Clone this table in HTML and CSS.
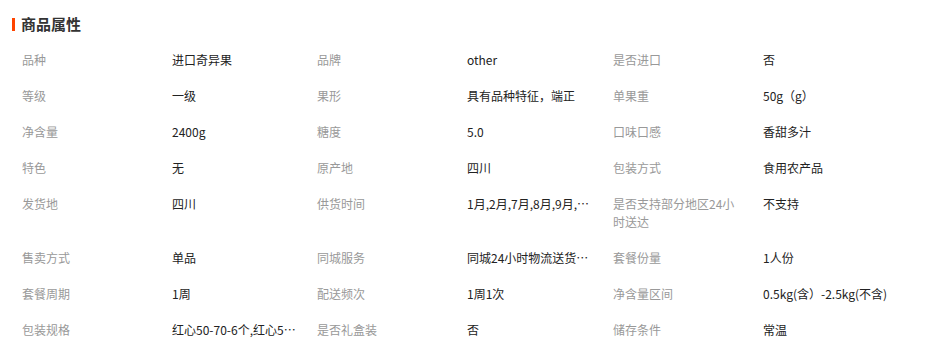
FILE: index.html
```html
<!DOCTYPE html>
<html lang="zh-CN">
<head>
<meta charset="utf-8">
<title>商品属性</title>
<link rel="stylesheet" href="styles.css">
</head>
<body>
<section class="attrs">
  <h2 class="attrs-title">商品属性</h2>
  <div class="attrs-grid">
    <div class="label">品种</div><div class="value">进口奇异果</div>
    <div class="label">品牌</div><div class="value">other</div>
    <div class="label">是否进口</div><div class="value last">否</div>

    <div class="label">等级</div><div class="value">一级</div>
    <div class="label">果形</div><div class="value">具有品种特征，端正</div>
    <div class="label">单果重</div><div class="value last">50g（g）</div>

    <div class="label">净含量</div><div class="value">2400g</div>
    <div class="label">糖度</div><div class="value">5.0</div>
    <div class="label">口味口感</div><div class="value last">香甜多汁</div>

    <div class="label">特色</div><div class="value">无</div>
    <div class="label">原产地</div><div class="value">四川</div>
    <div class="label">包装方式</div><div class="value last">食用农产品</div>

    <div class="label">发货地</div><div class="value">四川</div>
    <div class="label">供货时间</div><div class="value">1月,2月,7月,8月,9月,10月,11月,12月</div>
    <div class="label">是否支持部分地区24小时送达</div><div class="value last">不支持</div>

    <div class="label">售卖方式</div><div class="value">单品</div>
    <div class="label">同城服务</div><div class="value">同城24小时物流送货上门</div>
    <div class="label">套餐份量</div><div class="value last">1人份</div>

    <div class="label">套餐周期</div><div class="value">1周</div>
    <div class="label">配送频次</div><div class="value">1周1次</div>
    <div class="label">净含量区间</div><div class="value last">0.5kg(含）-2.5kg(不含)</div>

    <div class="label">包装规格</div><div class="value">红心50-70-6个,红心50-70-12个</div>
    <div class="label">是否礼盒装</div><div class="value">否</div>
    <div class="label">储存条件</div><div class="value last">常温</div>
  </div>
</section>
</body>
</html>
```

FILE: styles.css
```css
html, body {
  margin: 0;
  padding: 0;
  background: #fff;
}

body {
  font-family: "Noto Sans CJK SC", "Noto Sans", sans-serif;
  font-size: 12px;
  color: #333;
}

.attrs {
  padding: 16px 0 0 12px;
}

.attrs-title {
  margin: 0;
  display: flex;
  align-items: center;
  gap: 6px;
  font-size: 15px;
  line-height: 18px;
  height: 16px;
  font-weight: bold;
  color: #333;
}

.attrs-title::before {
  content: "";
  display: block;
  width: 3px;
  height: 13px;
  background: #ff4400;
}

.attrs-grid {
  margin-top: 10px;
  padding-left: 10px;
  display: grid;
  grid-template-columns: 150px 145px 150px 146px 150px 1fr;
  line-height: 18px;
}

.label,
.value {
  padding: 9px 0;
}

.label {
  color: #999;
  padding-right: 25px;
}

.value {
  color: #222;
  max-width: 124px;
  white-space: nowrap;
  overflow: hidden;
  text-overflow: ellipsis;
}

.value.last {
  max-width: none;
}
```
